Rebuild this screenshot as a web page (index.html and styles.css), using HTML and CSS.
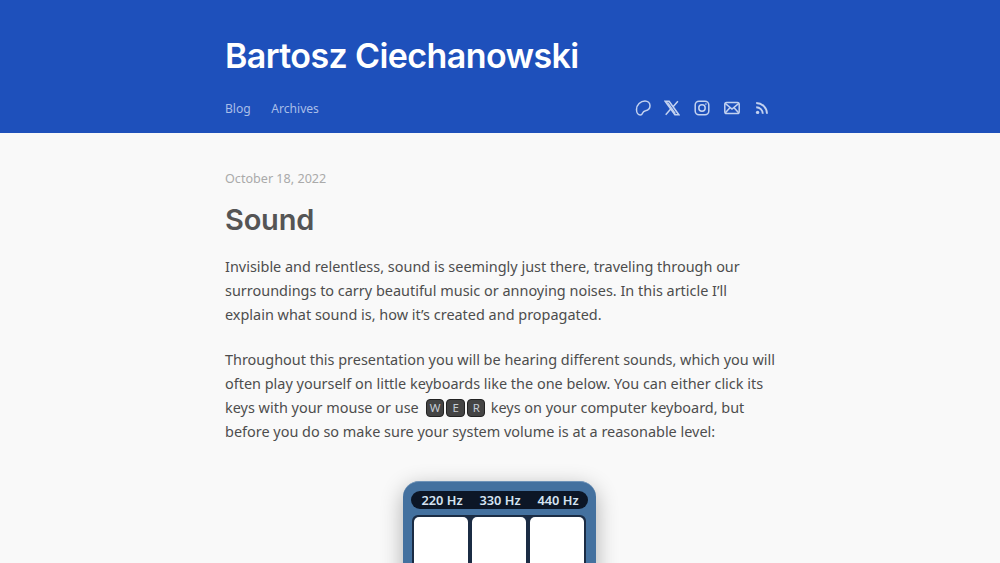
FILE: index.html
```html
<!DOCTYPE html>
<html lang="en">
<head>
    <meta charset="UTF-8">
    <meta name="viewport" content="width=device-width, initial-scale=1.0">
    <title>Sound - Bartosz Ciechanowski</title>
    <link rel="stylesheet" href="styles.css">
</head>
<body>

    <header class="site-header">
        <div class="column">
            <a class="site-title" href="#">Bartosz Ciechanowski</a>
            <nav class="site-nav">
                <div class="nav-links">
                    <a href="#">Blog</a>
                    <a href="#">Archives</a>
                </div>
                <div class="nav-icons">
                    <a href="#" aria-label="Patreon">
                        <svg viewBox="0 0 16 16" width="16" height="16"><path d="M10 1c2.800 0 5 2.100 5 4.800 0 2.800-2.200 4.500-4.500 5-1.600.3-2.400 1-3 2.500-.4 1.100-1.200 1.700-2.200 1.700-2 0-3.800-2.200-3.800-5.500C1.500 4.700 5.500 1 10 1z"/></svg>
                    </a>
                    <a href="#" aria-label="X">
                        <svg viewBox="0 0 16 16" width="16" height="16"><path d="M1.200 1.300h3.900l9.700 13.400h-3.900zM13.900 1.300 9.100 6.700M6.700 9.100l-5 5.600"/><path d="M3.400 2.400l7.900 11.200"/></svg>
                    </a>
                    <a href="#" aria-label="Instagram">
                        <svg viewBox="0 0 16 16" width="16" height="16"><rect x="1.200" y="1.200" width="13.600" height="13.600" rx="3.800"/><circle cx="8" cy="8" r="3.200"/><circle class="dot" cx="11.900" cy="4.100" r=".8"/></svg>
                    </a>
                    <a href="#" aria-label="Email">
                        <svg viewBox="0 0 16 16" width="16" height="16"><rect x=".8" y="2.400" width="14.400" height="11.200" rx="1.800"/><path d="M1.200 3.400 8 9l6.800-5.600M1.400 12.800l4.500-5.100M14.600 12.800l-4.500-5.100"/></svg>
                    </a>
                    <a href="#" aria-label="RSS">
                        <svg viewBox="0 0 16 16" width="16" height="16"><circle class="dot" cx="3.600" cy="12.400" r="1.700"/><path class="thick" d="M2.200 7.200a6.600 6.600 0 0 1 6.600 6.600M2.200 3a10.800 10.800 0 0 1 10.800 10.800"/></svg>
                    </a>
                </div>
            </nav>
        </div>
    </header>

    <main class="column article">
        <p class="post-date">October 18, 2022</p>
        <h1>Sound</h1>
        <p class="body-text">Invisible and relentless, sound is seemingly just there, traveling through our surroundings to carry beautiful music or annoying noises. In this article I’ll explain what sound is, how it’s created and propagated.</p>
        <p class="body-text">Throughout this presentation you will be hearing different sounds, which you will often play yourself on little keyboards like the one below. You can either click its keys with your mouse or use <span class="kbd-group"><span class="kbd">W</span><span class="kbd">E</span><span class="kbd">R</span></span> keys on your computer keyboard, but before you do so make sure your system volume is at a reasonable level:</p>

        <div class="synth">
            <div class="synth-labels">
                <span>220 Hz</span>
                <span>330 Hz</span>
                <span>440 Hz</span>
            </div>
            <div class="synth-keys">
                <div class="synth-key"></div>
                <div class="synth-key"></div>
                <div class="synth-key"></div>
            </div>
        </div>
    </main>

</body>
</html>
```
FILE: styles.css
```css
html, body {
    height: 563px;
    overflow: hidden;
}
body {
    font-family: "Noto Sans", Arial, sans-serif;
    background-color: #f9f9f9;
    color: #4d4d4d;
    margin: 0;
    padding: 0;
}
a {
    color: inherit;
    text-decoration: none;
}
.column {
    width: 550px;
    margin: 0 auto;
}
.site-header {
    height: 133px;
    background-color: #1e50bb;
    color: #fff;
}
.site-title {
    display: block;
    padding-top: 34px;
    font-family: Inter, sans-serif;
    font-size: 34px;
    font-weight: 600;
    line-height: 44px;
    letter-spacing: -0.600px;
}
.site-nav {
    display: flex;
    justify-content: space-between;
    align-items: center;
    margin-top: 18px;
    height: 24px;
    color: #a9bee8;
    font-size: 12.100px;
}
.nav-links {
    display: flex;
    gap: 20.500px;
}
.nav-icons {
    display: flex;
    gap: 13.700px;
    margin-right: 5.500px;
}
.nav-icons a {
    display: block;
    height: 16px;
}
.nav-icons svg {
    display: block;
    fill: none;
    stroke: #c3d2f0;
    stroke-width: 1.500;
}
.nav-icons .dot {
    fill: #c3d2f0;
    stroke: none;
}
.nav-icons .thick {
    stroke-width: 1.900;
}
.article {
    padding-top: 37px;
}
.post-date {
    margin: 0;
    font-size: 12.600px;
    line-height: 18px;
    color: #aaa;
}
h1 {
    margin: 13px 0 17px;
    font-family: Inter, sans-serif;
    font-size: 29px;
    font-weight: 600;
    line-height: 37px;
    letter-spacing: -0.200px;
    color: #555;
}
.body-text {
    margin: 0 -2px 22px 0;
    font-size: 14.450px;
    line-height: 23.800px;
}
.kbd-group {
    display: inline-flex;
    gap: 2px;
    margin: 0 1.500px 0 3.500px;
    vertical-align: 0.5px;
    height: 14px;
    align-items: center;
}
.kbd {
    width: 16.500px;
    height: 16px;
    background-color: #444;
    border: 1px solid #222;
    border-radius: 4px;
    color: #c4ccd4;
    font-size: 11.500px;
    line-height: 16px;
    text-align: center;
}
.synth {
    width: 193px;
    height: 200px;
    margin: 37px 0 0 178px;
    padding: 9px 8px;
    box-sizing: border-box;
    background-color: #44719f;
    border-radius: 16px;
    border-top: 1px solid #6f93b8;
    box-shadow: 0 6px 22px rgba(0, 0, 0, 0.3);
}
.synth-labels {
    display: flex;
    height: 18px;
    padding: 0 1px 0 2px;
    background-color: #0c1626;
    border-radius: 9px;
    color: #d5e3f2;
    font-size: 12.800px;
    font-weight: 600;
    line-height: 18px;
}
.synth-labels span {
    flex: 1;
    text-align: center;
}
.synth-keys {
    display: flex;
    gap: 4px;
    margin: 6px 2px 0 1px;
    padding: 2px;
    background-color: #1b2c44;
    border-radius: 6px;
    height: 150px;
}
.synth-key {
    flex: 1;
    background-color: #fff;
    border-radius: 5px;
}
```
